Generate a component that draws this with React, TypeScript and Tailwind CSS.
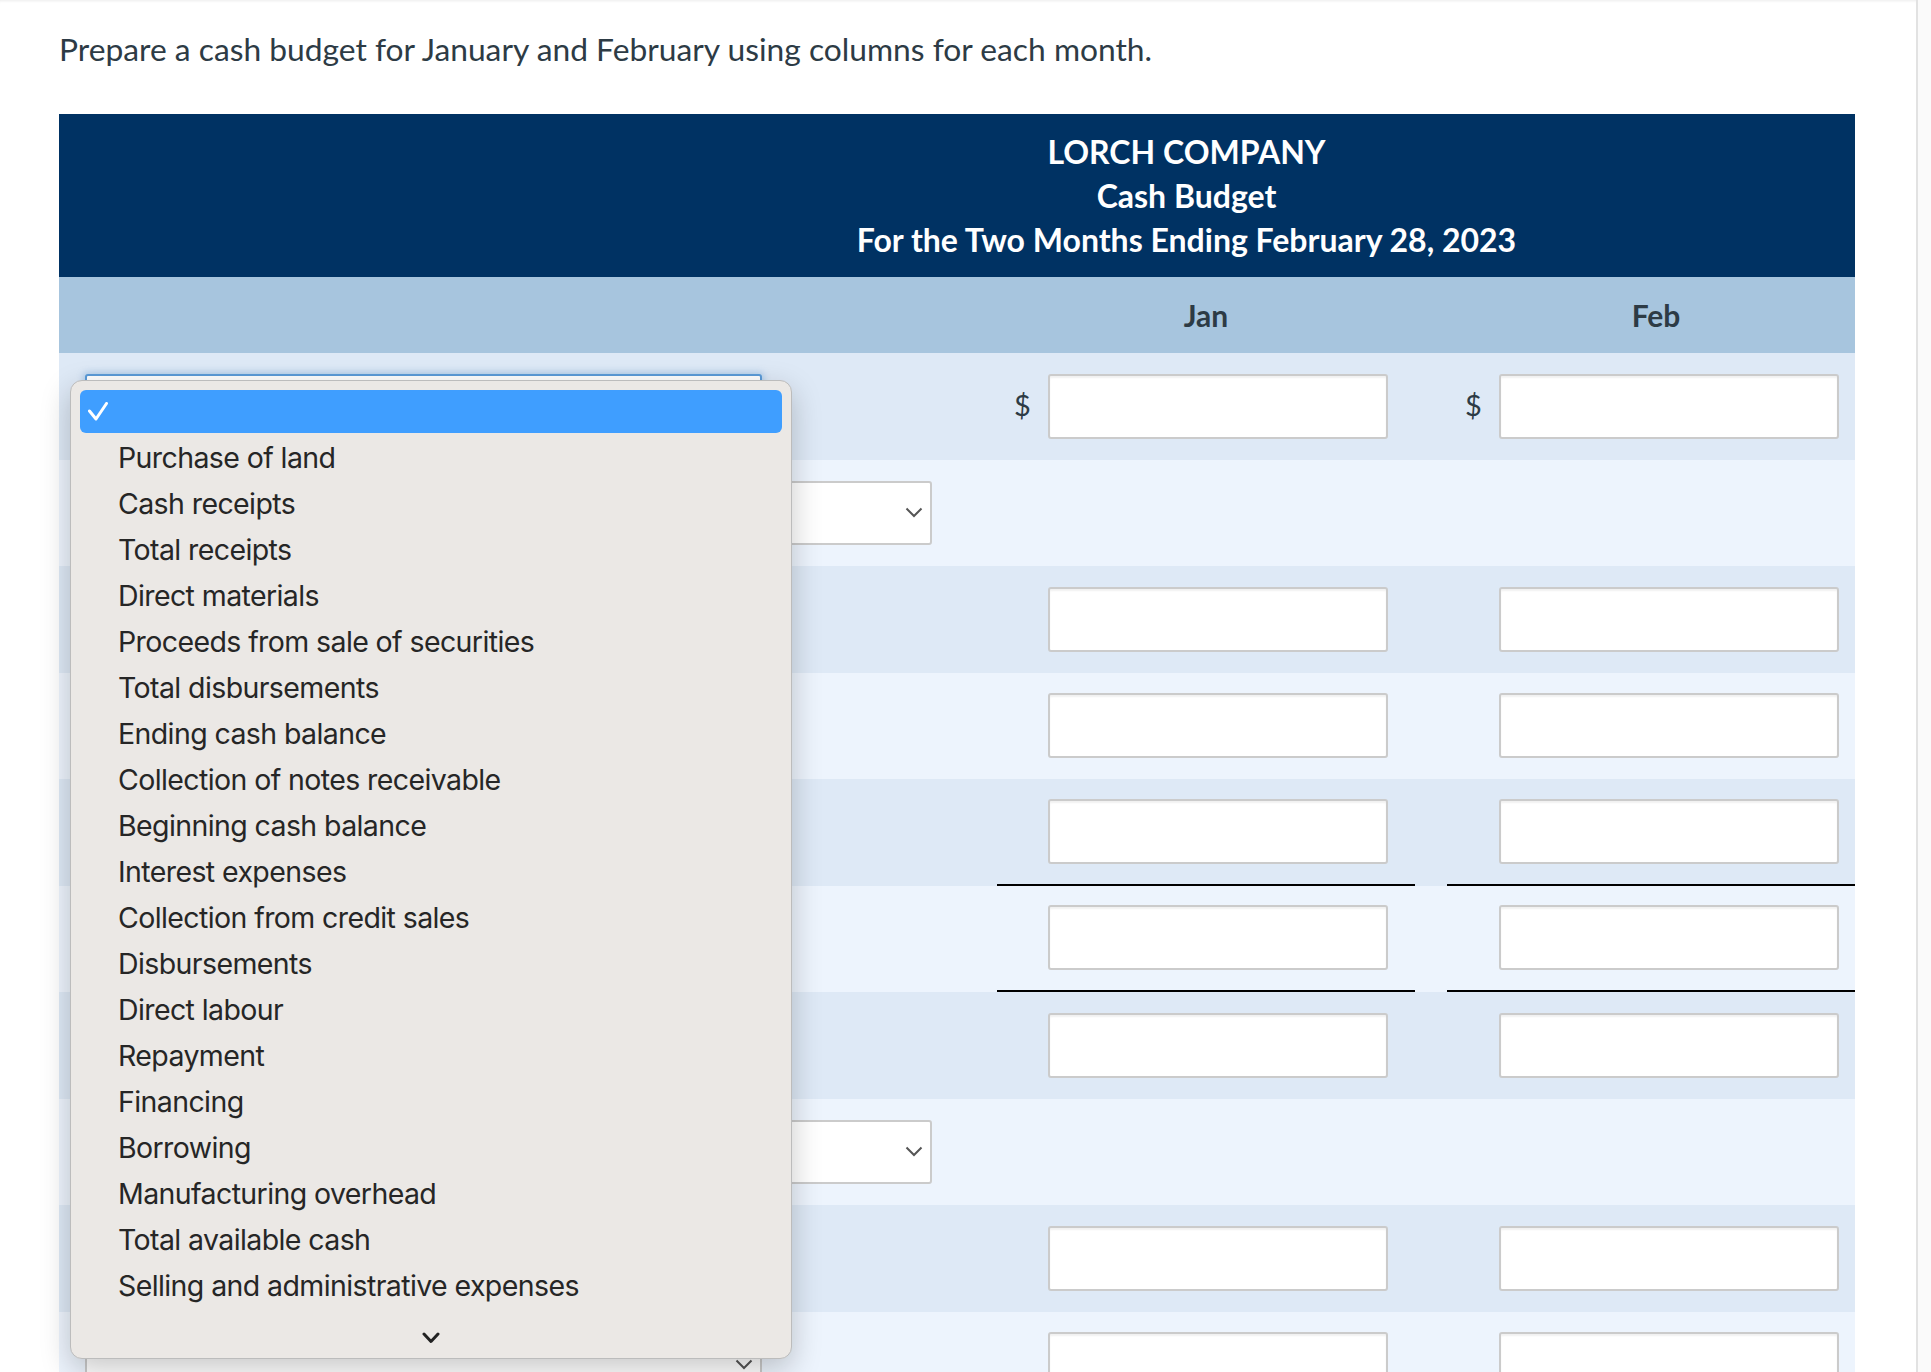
import * as React from "react";

type Row = {
	kind: "input" | "wide";
	dollar?: boolean;
	underline?: boolean;
	focused?: boolean;
};

const rows: Row[] = [
	{ kind: "input", dollar: true, focused: true },
	{ kind: "wide" },
	{ kind: "input" },
	{ kind: "input" },
	{ kind: "input", underline: true },
	{ kind: "input", underline: true },
	{ kind: "input" },
	{ kind: "wide" },
	{ kind: "input" },
	{ kind: "input" },
];

const options = [
	"Purchase of land",
	"Cash receipts",
	"Total receipts",
	"Direct materials",
	"Proceeds from sale of securities",
	"Total disbursements",
	"Ending cash balance",
	"Collection of notes receivable",
	"Beginning cash balance",
	"Interest expenses",
	"Collection from credit sales",
	"Disbursements",
	"Direct labour",
	"Repayment",
	"Financing",
	"Borrowing",
	"Manufacturing overhead",
	"Total available cash",
	"Selling and administrative expenses",
];

function Chevron() {
	return (
		<svg width="18" height="11" viewBox="0 0 18 11" fill="none">
			<path d="M1.5 1.5 L9 9 L16.5 1.5" stroke="#555" strokeWidth="2" />
		</svg>
	);
}

function SelectBox({ wide, focused }: { wide?: boolean; focused?: boolean }) {
	return (
		<div
			className={`flex h-[64px] items-center justify-end rounded-[3px] border-2 bg-white pr-[7px] ${
				wide ? "w-[847px]" : "w-[677px]"
			} ${
				focused
					? "border-[#5b9bd8] shadow-[0_0_6px_2px_rgba(91,155,216,0.35)]"
					: "border-[#cbcbcb]"
			}`}
		>
			<Chevron />
		</div>
	);
}

function Amount({ dollar }: { dollar?: boolean }) {
	return (
		<div className="flex items-center">
			<span className="-mt-[4px] w-[34px] pr-[2px] text-[29px] leading-none text-[#2d3b45]">
				{dollar ? "$" : ""}
			</span>
			<div className="h-[65px] w-[340px] rounded-[3px] border-2 border-[#cbcbcb] bg-white shadow-[inset_0_2px_2px_rgba(0,0,0,0.06)]" />
		</div>
	);
}

export default function App() {
	return (
		<div className="relative flex h-[1372px] w-full overflow-hidden bg-white font-['Lato',sans-serif]">
			<div className="flex-1 pl-[59px] pr-[61px] shadow-[inset_0_3px_3px_-2px_rgba(0,0,0,0.08)]">
				<p className="pt-[31px] text-[31.75px] leading-[36px] text-[#2d3b45]">
					Prepare a cash budget for January and February using columns for each
					month.
				</p>

				<div className="mt-[47px]">
					<div className="bg-[#003263] pb-[15px] pl-[459px] pt-[16px] text-center text-[32px] font-bold leading-[44px] text-white">
						<div>LORCH COMPANY</div>
						<div>Cash Budget</div>
						<div>For the Two Months Ending February 28, 2023</div>
					</div>

					<div className="flex h-[76px] items-center bg-[#a7c5de] text-[30px] font-bold text-[#2d3b45]">
						<div className="w-[938px]" />
						<div className="w-[418px] text-center">Jan</div>
						<div className="w-[32px]" />
						<div className="flex-1 pl-[10px] text-center">Feb</div>
					</div>

					{rows.map((row, i) => (
						<div
							key={i}
							className={`flex h-[106.5px] items-stretch ${
								i % 2 === 0 ? "bg-[#dee9f6]" : "bg-[#edf4fd]"
							}`}
						>
							<div className="flex w-[938px] items-center pl-[26px]">
								<SelectBox wide={row.kind === "wide"} focused={row.focused} />
							</div>
							{row.kind === "input" && (
								<>
									<div
										className={`flex w-[418px] items-center pl-[17px] ${
											row.underline ? "border-b-2 border-black" : ""
										}`}
									>
										<Amount dollar={row.dollar} />
									</div>
									<div className="w-[32px]" />
									<div
										className={`flex flex-1 items-center pl-[18px] ${
											row.underline ? "border-b-2 border-black" : ""
										}`}
									>
										<Amount dollar={row.dollar} />
									</div>
								</>
							)}
						</div>
					))}
				</div>
			</div>

			<div className="w-[15px] border-l-2 border-[#e2e2e2] bg-[#fafafa]" />

			{/* open select menu */}
			<div className="absolute left-[70px] top-[380px] h-[979px] w-[722px] rounded-[12px] border border-[#bcbcbc] bg-[#ebe8e5] px-[9px] pt-[9px] font-['Inter',sans-serif] shadow-[0_10px_30px_rgba(0,0,0,0.22)]">
				<div className="flex h-[43px] items-center rounded-[6px] bg-[#3f9eff] pl-[8px]">
					<svg width="20" height="19" viewBox="0 0 20 19" fill="none">
						<path
							d="M1.5 9 L8 17 L18.5 1.5"
							stroke="white"
							strokeWidth="3"
							strokeLinecap="round"
							strokeLinejoin="round"
						/>
					</svg>
				</div>
				<ul className="mt-[2px]">
					{options.map((o) => (
						<li
							key={o}
							className="h-[46px] pl-[38px] text-[28.5px] leading-[46px] tracking-[-0.6px] text-[#262626]"
						>
							{o}
						</li>
					))}
				</ul>
				<div className="mt-[23px] flex justify-center">
					<svg width="18" height="12" viewBox="0 0 18 12" fill="none">
						<path
							d="M2 2 L9 9.5 L16 2"
							stroke="#222"
							strokeWidth="3"
							strokeLinecap="round"
							strokeLinejoin="round"
						/>
					</svg>
				</div>
			</div>
		</div>
	);
}
